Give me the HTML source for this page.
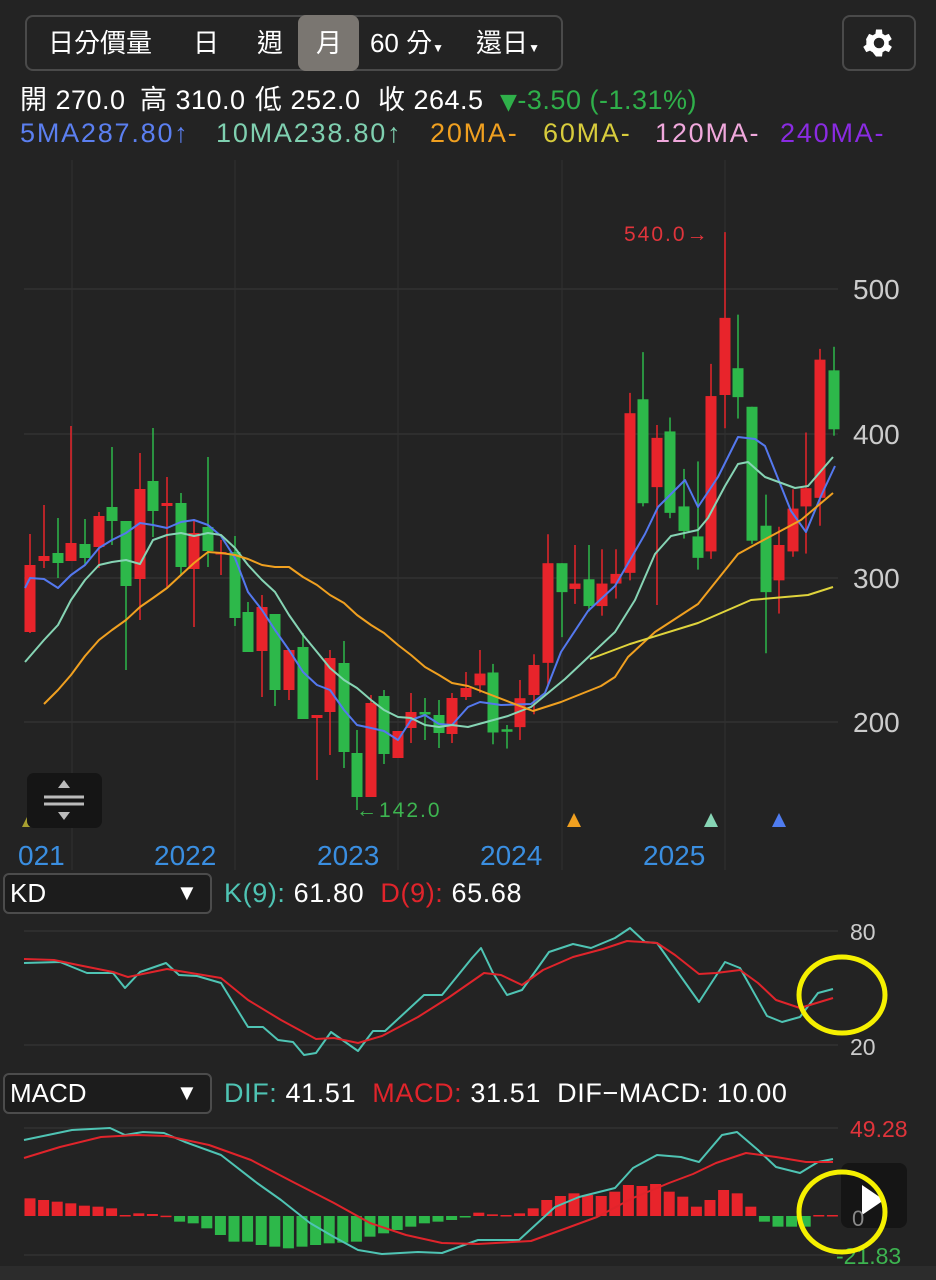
<!DOCTYPE html>
<html><head><meta charset="utf-8">
<style>
html,body{margin:0;padding:0;background:#232323;width:936px;height:1280px;overflow:hidden;font-family:"Liberation Sans","Noto Sans CJK TC",sans-serif;color:#fff}
.abs{position:absolute}
#seg{left:25px;top:15px;width:538px;height:56px;border:2px solid #4a4a4a;border-radius:8px;box-sizing:border-box}
.tab{position:absolute;top:15px;height:55px;line-height:57px;font-size:26px;color:#fff;text-align:center}
#sel{left:298px;top:15px;width:61px;height:56px;background:#7a7671;border-radius:8px}
#gear{left:842px;top:15px;width:74px;height:56px;border:2px solid #4a4a4a;border-radius:8px;box-sizing:border-box}
.t{position:absolute;font-size:26px;white-space:nowrap;line-height:34px}
.a{font-size:27px;letter-spacing:0.5px}
.b{font-size:27px;letter-spacing:1.8px}
.box{border:2px solid #4c4c4c;border-radius:6px;box-sizing:border-box;background:#1c1c1c}
</style></head><body>
<div id="seg" class="abs"></div>
<div id="sel" class="abs"></div>
<div class="tab" style="left:40px;width:120px">日分價量</div>
<div class="tab" style="left:186px;width:40px">日</div>
<div class="tab" style="left:250px;width:40px">週</div>
<div class="tab" style="left:309px;width:40px">月</div>
<div class="tab" style="left:362px;width:90px">60 分<span style="font-size:12px">▼</span></div>
<div class="tab" style="left:468px;width:80px">還日<span style="font-size:12px">▼</span></div>
<div id="gear" class="abs"></div>
<svg class="abs" style="left:861px;top:25px" width="36" height="36" viewBox="0 0 24 24"><path fill="#fff" d="M19.4 13a7.5 7.5 0 0 0 0-2l2.1-1.6-2-3.5-2.5 1a7 7 0 0 0-1.7-1L15 3h-4l-.4 2.9a7 7 0 0 0-1.7 1l-2.5-1-2 3.5L4.6 11a7.5 7.5 0 0 0 0 2l-2.1 1.6 2 3.5 2.5-1a7 7 0 0 0 1.7 1L11 21h4l.4-2.9a7 7 0 0 0 1.7-1l2.5 1 2-3.5zM13 15.5a3.5 3.5 0 1 1 0-7 3.5 3.5 0 0 1 0 7z" transform="translate(-1 0)"/></svg>
<div class="t a" style="left:20px;top:83px">開 270.0</div>
<div class="t a" style="left:140px;top:83px">高 310.0</div>
<div class="t a" style="left:255px;top:83px">低 252.0</div>
<div class="t a" style="left:378px;top:83px">收 264.5</div>
<div class="t a" style="left:500px;top:83px;color:#2fb04a"><span style="font-family:'DejaVu Sans',sans-serif;font-size:22px">▼</span>-3.50 (-1.31%)</div>
<div class="t b" style="left:20px;top:116px;color:#5b7ff0">5MA287.80↑</div>
<div class="t b" style="left:216px;top:116px;color:#7fd0b0">10MA238.80↑</div>
<div class="t b" style="left:430px;top:116px;color:#f0a020">20MA-</div>
<div class="t b" style="left:543px;top:116px;color:#d8cc3c">60MA-</div>
<div class="t b" style="left:655px;top:116px;color:#f0a8dc">120MA-</div>
<div class="t b" style="left:780px;top:116px;color:#8a2be2">240MA-</div>

<div class="abs box" style="left:3px;top:873px;width:209px;height:41px"></div>
<div class="abs" style="left:10px;top:878px;font-size:26px">KD</div>
<div class="abs" style="left:176px;top:880px;font-size:22px">▼</div>
<div class="t" style="left:224px;top:876px;font-size:27px;letter-spacing:0.6px"><span style="color:#4fc4b4">K(9):</span> 61.80&nbsp; <span style="color:#e0242b">D(9):</span> 65.68</div>
<div class="abs box" style="left:3px;top:1073px;width:209px;height:41px"></div>
<div class="abs" style="left:10px;top:1078px;font-size:26px">MACD</div>
<div class="abs" style="left:176px;top:1080px;font-size:22px">▼</div>
<div class="t" style="left:224px;top:1076px;font-size:27px;letter-spacing:0.6px"><span style="color:#4fc4b4">DIF:</span> 41.51&nbsp; <span style="color:#e0242b">MACD:</span> 31.51&nbsp; DIF−MACD: 10.00</div>

<svg id="c" class="abs" style="left:0;top:0" width="936" height="1280"></svg>
<script>
var s='';
function L(x1,y1,x2,y2,c,w){s+='<line x1="'+x1+'" y1="'+y1+'" x2="'+x2+'" y2="'+y2+'" stroke="'+c+'" stroke-width="'+(w||1)+'"/>';}
var G='#3a3a3a';
[289,434,578,722].forEach(y=>L(24,y,838,y,G));
[72,235,398,562,725].forEach(x=>L(x,160,x,870,'#303030'));
[931,1045].forEach(y=>L(24,y,838,y,G));
[1128,1255].forEach(y=>L(24,y,838,y,G));
function T(x,y,t,c,sz,extra){s+='<text x="'+x+'" y="'+y+'" fill="'+c+'" font-size="'+sz+'" font-family="Liberation Sans,sans-serif" '+(extra||'')+'>'+t+'</text>';}
T(853,299,'500','#ccc',28);T(853,444,'400','#ccc',28);T(853,588,'300','#ccc',28);T(853,732,'200','#ccc',28);
T(850,940,'80','#ccc',23);T(850,1055,'20','#ccc',23);
T(850,1137,'49.28','#e0343b',23);T(836,1264,'-21.83','#3db450',23);
T(18,865,'021','#3a8ee0',28);T(154,865,'2022','#3a8ee0',28);T(317,865,'2023','#3a8ee0',28);T(480,865,'2024','#3a8ee0',28);T(643,865,'2025','#3a8ee0',28);
T(624,241,'540.0→','#e0343b',21,'letter-spacing="2"');
T(356,817,'←142.0','#3db450',21,'letter-spacing="2"');
function f(x,y){return x>=470?200+(y-200)*1.0714:y;}
var C=[[30,565,632,534,633,'r'],[44,556,561,505,568,'r'],[58,553,563,518,578,'g'],[71,543,561,426,561,'r'],[85,544,558,519,565,'g'],[99,516,547,512,568,'r'],[112,507,521,447,545,'g'],[126,521,586,521,670,'g'],[140,489,579,453,620,'r'],[153,481,511,428,537,'g'],[167,503,506,477,588,'r'],[181,503,567,493,575,'g'],[194,533,569,519,627,'r'],[208,527,551,457,567,'g'],[221,552,554,540,575,'r'],[235,552,618,536,626,'g'],[248,612,652,602,652,'g'],[262,607,651,595,697,'r'],[275,614,690,614,706,'g'],[289,650,690,650,700,'r'],[303,647,719,633,719,'g'],[317,715,718,715,780,'r'],[330,658,712,650,755,'r'],[344,663,752,641,768,'g'],[357,753,797,730,810,'g'],[371,703,797,695,797,'r'],[384,696,754,690,764,'g'],[398,731,758,731,758,'r'],[411,712,728,693,743,'r'],[425,712,714,698,740,'g'],[439,715,733,700,748,'g'],[452,698,734,693,743,'r'],[466,688,697,672,700,'r'],
[480,642,653,620,660,'r'],[493,641,697,633,708,'g'],[507,694,696,690,712,'g'],[520,665,692,648,704,'r'],[534,634,662,624,680,'r'],[548,539,632,512,654,'r'],[562,539,566,539,608,'g'],[575,558,563,522,577,'r'],[589,554,579,522,584,'g'],[602,558,579,526,588,'r'],[616,549,558,526,572,'r'],[630,399,548,380,555,'r'],[643,386,483,342,486,'g'],[657,422,468,410,578,'r'],[670,416,492,403,497,'g'],[684,486,509,451,516,'g'],[698,514,534,444,545,'g'],[711,383,528,353,535,'r'],[725,310,382,230,413,'r'],[738,357,384,307,404,'g'],[752,393,518,393,521,'g'],[766,504,566,475,623,'g'],[779,522,555,505,586,'r'],[793,488,528,470,533,'r'],[806,469,486,417,530,'r'],[820,349,478,339,504,'r'],[834,359,414,337,420,'g']];
var R='#e8242b',GR='#2db84a';
C.forEach(c=>{var x=c[0],col=c[5]=='r'?R:GR,a=f(x,c[1]),b=f(x,c[2]),h=f(x,c[3]),l=f(x,c[4]);
L(x,h,x,l,col,1.5);var t=Math.min(a,b),hh=Math.max(2.5,Math.abs(b-a));s+='<rect x="'+(x-5.5)+'" y="'+t+'" width="11" height="'+hh+'" fill="'+col+'"/>';});
function P(pts,c,w){s+='<polyline fill="none" stroke="'+c+'" stroke-width="'+(w||2)+'" stroke-linejoin="round" points="'+pts.map(p=>p.join(',')).join(' ')+'"/>';}
P([[25,588],[30,578],[44,579],[58,588],[71,575],[85,565],[99,548],[112,540],[126,533],[140,523],[153,525],[167,528],[181,522],[194,520],[208,525],[221,536],[235,558],[248,592],[262,610],[275,630],[289,650],[303,672],[317,685],[330,690],[344,710],[357,725],[371,728],[384,731],[398,740],[411,720],[425,715],[439,724],[452,725],[468,707],[480,702],[501,705],[531,704],[545,693],[561,652],[588,611],[615,586],[645,534],[658,507],[685,480],[698,507],[718,477],[738,437],[755,439],[765,446],[791,511],[806,532],[821,496],[835,466]],'#5478ee');
P([[25,662],[44,640],[58,625],[71,600],[85,580],[99,565],[112,562],[126,560],[140,564],[153,540],[167,535],[181,533],[194,536],[208,533],[221,535],[235,548],[248,565],[262,580],[275,592],[289,615],[303,635],[317,652],[330,668],[344,680],[357,688],[371,700],[384,710],[398,717],[411,718],[425,725],[439,727],[452,725],[468,727],[508,716],[531,707],[565,679],[615,632],[635,600],[655,554],[671,536],[698,530],[708,518],[725,486],[738,464],[748,462],[765,477],[795,488],[808,486],[821,471],[833,457]],'#86d4b4');
P([[44,704],[58,690],[71,675],[85,656],[99,640],[112,630],[126,620],[140,607],[153,598],[167,588],[181,575],[194,563],[208,552],[221,553],[235,555],[248,559],[262,565],[275,567],[289,567],[303,577],[317,585],[330,595],[344,603],[357,615],[371,625],[384,633],[398,645],[411,655],[425,667],[439,675],[452,683],[468,686],[533,711],[561,702],[601,686],[615,677],[628,657],[655,632],[698,604],[738,554],[758,543],[801,520],[833,493]],'#f0a020');
P([[590,659],[630,644],[698,623],[751,600],[808,595],[833,587]],'#e0d43c');
function tri(x,y,c){s+='<polygon points="'+(x-7)+','+(y+7)+' '+(x+7)+','+(y+7)+' '+x+','+(y-7)+'" fill="'+c+'"/>';}
tri(29,820,'#a8a030');tri(574,820,'#f0a020');tri(711,820,'#86d4b4');tri(779,820,'#4f7cf0');
P([[24,963],[60,962],[87,973],[113,973],[125,988],[140,972],[166,963],[179,975],[197,976],[221,983],[248,1027],[263,1027],[278,1040],[293,1042],[304,1055],[316,1053],[331,1032],[358,1051],[373,1031],[385,1031],[424,995],[442,995],[472,958],[481,948],[493,973],[507,995],[522,990],[549,952],[573,944],[591,948],[615,938],[630,928],[645,942],[657,943],[699,1002],[725,962],[740,968],[767,1016],[782,1022],[800,1017],[818,993],[833,989]],'#4fc4b4');
P([[24,959],[54,960],[78,965],[113,972],[128,977],[167,969],[221,978],[248,1000],[281,1020],[316,1039],[334,1038],[358,1043],[382,1036],[418,1017],[448,998],[484,973],[501,975],[522,985],[543,970],[573,957],[603,949],[627,941],[657,943],[675,955],[699,974],[716,973],[740,970],[758,983],[776,1000],[800,1008],[833,998]],'#e0242b');
var H=[415,420,425,430,437,440,445,465,460,462,467,485,490,505,525,545,545,555,560,565,560,555,550,548,545,530,520,510,500,490,485,480,468,458,463,465,460,445,420,408,400,405,408,395,375,378,372,395,410,440,420,390,400,440,485,500,500,500,465,465];
H.forEach((v,i)=>{var x=30+i*13.6,y=1060+v/3,z=1216;var up=y<z;s+='<rect x="'+(x-5.5)+'" y="'+Math.min(y,z)+'" width="11" height="'+Math.max(1.5,Math.abs(z-y))+'" fill="'+(up?R:GR)+'"/>';});
P([[24,1140],[72,1130],[110,1128],[125,1135],[143,1132],[164,1133],[185,1142],[221,1155],[257,1183],[281,1200],[310,1223],[334,1237],[358,1250],[382,1254],[418,1252],[442,1253],[478,1240],[519,1240],[555,1207],[579,1197],[615,1188],[633,1168],[657,1155],[681,1157],[699,1162],[722,1135],[737,1132],[758,1150],[776,1167],[800,1173],[818,1162],[833,1159]],'#4fc4b4');
P([[24,1158],[60,1147],[101,1137],[137,1135],[167,1136],[209,1145],[251,1160],[293,1182],[334,1203],[370,1223],[406,1235],[442,1243],[478,1244],[531,1241],[567,1228],[597,1217],[633,1198],[669,1183],[693,1174],[716,1163],[746,1153],[776,1157],[806,1162],[833,1162]],'#e0242b');
s+='<rect x="841" y="1163" width="66" height="65" rx="8" fill="#151515"/>';
s+='<polygon points="862,1185 862,1215 884,1200" fill="#fff"/>';
T(852,1226,'0','#888',22);
s+='<rect x="27" y="773" width="75" height="55" rx="7" fill="#151515"/>';
L(44,797,84,797,'#bbb',3);L(44,804,84,804,'#bbb',3);
s+='<polygon points="58,788 70,788 64,780" fill="#bbb"/><polygon points="58,812 70,812 64,820" fill="#bbb"/>';
s+='<ellipse cx="842" cy="995" rx="43" ry="38" fill="none" stroke="#f5f000" stroke-width="5"/>';
s+='<ellipse cx="842" cy="1212" rx="43" ry="40" fill="none" stroke="#f5f000" stroke-width="5"/>';
L(0,1273,936,1273,'#2c2c2c',14);
document.getElementById('c').innerHTML=s;
</script>
</body></html>
